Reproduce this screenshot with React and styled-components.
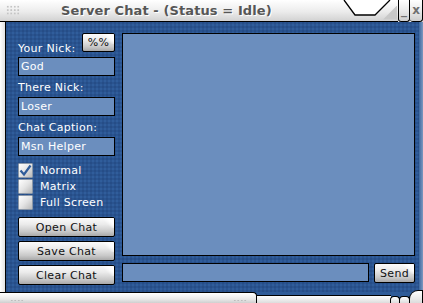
import React from "react";
import styled, { createGlobalStyle } from "styled-components";

const GlobalStyle = createGlobalStyle`
  html, body { margin: 0; padding: 0; background: #ffffff; }
  body { font-family: "DejaVu Sans", Verdana, sans-serif; }
`;

const Window = styled.div`
  position: relative;
  width: 423px;
  height: 303px;
  display: flex;
  flex-direction: column;
  overflow: hidden;
  font-family: "DejaVu Sans", Verdana, sans-serif;
  font-size: 11px;
  letter-spacing: 0.3px;
`;

const TitleBar = styled.div`
  position: relative;
  height: 22px;
  flex: none;
  display: flex;
`;

const TitleMain = styled.div`
  flex: 1;
  display: flex;
  align-items: center;
  box-sizing: border-box;
  padding-left: 6px;
  border-bottom: 1px solid #000;
  background: linear-gradient(#ffffff, #ececec 55%, #d2d2d2);
`;

const Grip = styled.div`
  width: 14px;
  height: 10px;
  margin-top: -1px;
  background-image: radial-gradient(circle, #c4c4c4 0.9px, transparent 1.1px);
  background-size: 3.5px 3.4px;
`;

const TitleText = styled.div`
  margin-left: 41px;
  font-weight: bold;
  font-size: 13px;
  color: #565656;
  text-shadow: 1px 1px 0 #ffffff;
  letter-spacing: 0.1px;
`;

const Notch = styled.svg`
  position: absolute;
  left: 340px;
  top: 0;
`;

const Hatch = styled.div`
  width: 14px;
  height: 14px;
  margin: 4px 1px 0 0;
  background-image: radial-gradient(circle, #c8c8c8 0.7px, transparent 1px);
  background-size: 2px 2px;
  clip-path: polygon(100% 0, 100% 100%, 0 100%);
`;

const TitleButton = styled.div`
  width: ${p => p.$w}px;
  height: 22px;
  box-sizing: border-box;
  border: 1px solid #000;
  border-top: none;
  border-left: ${p => (p.$first ? "1px solid #000" : "none")};
  border-radius: 0 0 3px 3px;
  background: linear-gradient(#ffffff, #e8e8e8 55%, #cdcdcd);
  color: #707070;
  font-weight: bold;
  font-size: 12px;
  letter-spacing: 0;
  display: flex;
  justify-content: center;
  align-items: center;
  line-height: 1;
  padding-bottom: 1px;
`;

const Body = styled.div`
  flex: 1;
  display: flex;
  min-height: 0;
`;

const LeftEdge = styled.div`
  width: 6px;
  box-sizing: border-box;
  border-right: 1px solid #000;
  background: linear-gradient(90deg, #ffffff, #e2e2e2);
`;

const RightEdge = styled.div`
  width: 4px;
  background: linear-gradient(90deg, #3b679f, #7d98bf);
`;

const Content = styled.div`
  flex: 1;
  display: flex;
  gap: 7px;
  box-sizing: border-box;
  padding: 11px 4px 0 12px;
  background-color: #305d9b;
  background-image:
    linear-gradient(90deg, rgba(20, 50, 100, 0.2) 50%, transparent 50%),
    linear-gradient(rgba(20, 50, 100, 0.2) 50%, transparent 50%);
  background-size: 4px 4px;
`;

const LeftColumn = styled.div`
  width: 97px;
  flex: none;
  display: flex;
  flex-direction: column;
`;

const NickRow = styled.div`
  height: 24px;
  display: flex;
  justify-content: space-between;
  align-items: flex-start;
`;

const Label = styled.div`
  color: #ffffff;
  line-height: 13px;
  padding: ${p => (p.$first ? "9px 0 2px" : "5px 0 3px")};
  white-space: nowrap;
`;

const Field = styled.div`
  height: 19px;
  box-sizing: border-box;
  border: 1px solid #000;
  background: #6b8ebe;
  color: #ffffff;
  line-height: 17px;
  padding-left: 2px;
  white-space: nowrap;
  overflow: hidden;
`;

const Checks = styled.div`
  display: flex;
  flex-direction: column;
  margin-top: 6px;
`;

const CheckRow = styled.div`
  height: 16px;
  display: flex;
  align-items: center;
  gap: 7px;
  color: #ffffff;
`;

const Box = styled.div`
  width: 15px;
  height: 15px;
  flex: none;
  box-sizing: border-box;
  border: 1px solid #8a97a8;
  border-radius: 1px;
  background: linear-gradient(135deg, #ffffff, #e4e4e4 50%, #b9b9b9);
  display: flex;
  align-items: center;
  justify-content: center;
`;

const Buttons = styled.div`
  display: flex;
  flex-direction: column;
  gap: 4px;
  margin-top: 7px;
`;

const Button = styled.div`
  position: relative;
  width: ${p => p.$w || 97}px;
  height: ${p => p.$h || 20}px;
  flex: none;
  box-sizing: border-box;
  border: 1px solid #000;
  border-radius: 2px;
  background: linear-gradient(#fbfbfb, #ebebeb 35%, #c9c9c9 75%, #a9a9a9);
  color: #111111;
  display: flex;
  align-items: center;
  justify-content: center;
  line-height: 1;
  overflow: hidden;

  &::after {
    content: "";
    position: absolute;
    right: 0;
    top: 0;
    width: 12px;
    height: 10px;
    background: linear-gradient(225deg, #ffffff 30%, rgba(255, 255, 255, 0) 60%);
  }
`;

const RightColumn = styled.div`
  flex: 1;
  display: flex;
  flex-direction: column;
  gap: 7px;
`;

const ChatArea = styled.div`
  height: 223px;
  box-sizing: border-box;
  border: 1px solid #000;
  background: #6b8ebe;
`;

const SendRow = styled.div`
  display: flex;
  gap: 5px;
  align-items: flex-start;
`;

const MessageField = styled(Field)`
  flex: 1;
`;

const BottomBar = styled.div`
  height: 11px;
  flex: none;
  display: flex;
  align-items: flex-end;
  background: #2e5b98;
`;

const BottomLeft = styled.div`
  width: 257px;
  height: 11px;
  box-sizing: border-box;
  border-top: 1px solid #000;
  border-right: 1px solid #000;
  border-top-right-radius: 4px;
  background: linear-gradient(#ffffff, #e9e9e9 60%, #cfcfcf);
  display: flex;
  align-items: flex-end;
  padding: 0 0 1px 10px;
`;

const Dots = styled.div`
  width: 14px;
  height: 3px;
  margin-left: ${p => p.$ml || 0}px;
  background-image: radial-gradient(circle, #bdbdbd 0.8px, transparent 1px);
  background-size: 3.5px 3px;
`;

const BottomMid = styled.div`
  flex: 1;
  height: 8px;
  box-sizing: border-box;
  border-top: 1px solid #000;
  background: linear-gradient(#ffffff, #dcdcdc);
`;

const Knob = styled.div`
  width: ${p => p.$w}px;
  height: ${p => p.$h}px;
  box-sizing: border-box;
  border: 1px solid #000;
  border-bottom: none;
  border-radius: ${p => p.$r || "4px 4px 0 0"};
  background: linear-gradient(#ffffff, #dcdcdc);
  margin-left: -1px;
`;

const items = [
  { label: "Normal", checked: true },
  { label: "Matrix" },
  { label: "Full Screen" }
];

export default function App() {
  return (
    <>
      <GlobalStyle />
      <Window>
        <TitleBar>
          <TitleMain>
            <Grip />
            <TitleText>Server Chat - (Status = Idle)</TitleText>
            <div style={{ flex: 1 }} />
            <Hatch />
          </TitleMain>
          <TitleButton $w={12} $first>_</TitleButton>
          <TitleButton $w={13}>x</TitleButton>
          <Notch width="54" height="17" viewBox="0 0 54 17">
            <polygon points="4,0 15,15 35,15 50,0" fill="#ffffff" />
            <polyline points="4,0 15,15 35,15 50,0" fill="none" stroke="#000" strokeWidth="1.3" />
          </Notch>
        </TitleBar>
        <Body>
          <LeftEdge />
          <Content>
            <LeftColumn>
              <NickRow>
                <Label $first>Your Nick:</Label>
                <Button $w={33} $h={19}>%%</Button>
              </NickRow>
              <Field>God</Field>
              <Label>There Nick:</Label>
              <Field>Loser</Field>
              <Label>Chat Caption:</Label>
              <Field>Msn Helper</Field>
              <Checks>
                {items.map(it => (
                  <CheckRow key={it.label}>
                    <Box>
                      {it.checked && (
                        <svg width="13" height="13" viewBox="0 0 13 13">
                          <path d="M1.5 6.5 L5 10.5 L11.5 1.5" fill="none" stroke="#2f5c9a" strokeWidth="2.2" />
                        </svg>
                      )}
                    </Box>
                    {it.label}
                  </CheckRow>
                ))}
              </Checks>
              <Buttons>
                <Button>Open Chat</Button>
                <Button>Save Chat</Button>
                <Button>Clear Chat</Button>
              </Buttons>
            </LeftColumn>
            <RightColumn>
              <ChatArea />
              <SendRow>
                <MessageField />
                <Button $w={41} $h={20}>Send</Button>
              </SendRow>
            </RightColumn>
          </Content>
          <RightEdge />
        </Body>
        <BottomBar>
          <BottomLeft>
            <Dots />
            <Dots $ml={209} />
          </BottomLeft>
          <BottomMid />
          <Knob $w={10} $h={7} />
          <Knob $w={11} $h={7} />
          <Knob $w={14} $h={13} $r="9px 0 0 0" />
        </BottomBar>
      </Window>
    </>
  );
}
